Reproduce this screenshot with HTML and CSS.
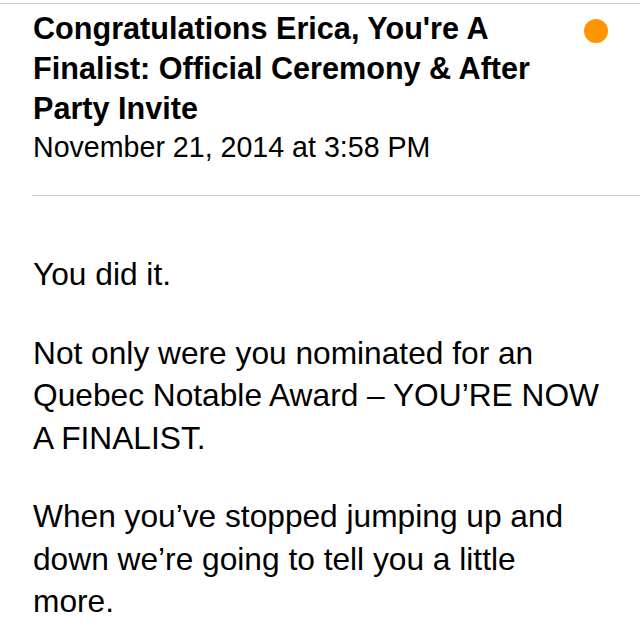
FILE: index.html
```html
<!DOCTYPE html>
<html lang="en">
<head>
<meta charset="utf-8">
<title>Mail</title>
<link rel="stylesheet" href="styles.css">
</head>
<body>
<div class="top-rule"></div>
<header class="header">
  <div class="head-text">
    <h1 class="subject">Congratulations Erica, You're A Finalist: Official Ceremony &amp; After Party Invite</h1>
    <div class="date">November 21, 2014 at 3:58 PM</div>
  </div>
  <span class="unread-dot"></span>
</header>
<div class="divider"></div>
<main class="message">
  <p>You did it.</p>
  <p>Not only were you nominated for an Quebec Notable Award – YOU’RE NOW A FINALIST.</p>
  <p>When you’ve stopped jumping up and down we’re going to tell you a little more.</p>
</main>
</body>
</html>
```

FILE: styles.css
```css
html, body {
  margin: 0;
  padding: 0;
  background: #fff;
}
body {
  font-family: "Liberation Sans", Arial, Helvetica, sans-serif;
  color: #000;
  width: 640px;
  height: 635px;
  overflow: hidden;
}
.top-rule {
  margin-top: 3px;
  height: 1px;
  background: #c4c4c4;
}
.header {
  display: flex;
  align-items: flex-start;
  padding: 4px 32px 0 33px;
}
.head-text {
  flex: 1;
  padding-right: 14px;
}
.subject {
  margin: 0;
  font-size: 30.6px;
  line-height: 40px;
  font-weight: 700;
}
.date {
  margin-top: 1px;
  font-size: 28.6px;
  line-height: 36px;
}
.unread-dot {
  flex: none;
  width: 24px;
  height: 24px;
  border-radius: 50%;
  background: #ff9500;
  margin-top: 11px;
}
.divider {
  margin: 30px 0 0 32px;
  height: 1px;
  background: #c4c4c4;
}
.message {
  padding: 57px 38px 0 33px;
}
.message p {
  margin: 0 0 36px;
  font-size: 31.7px;
  line-height: 42.5px;
}
```
